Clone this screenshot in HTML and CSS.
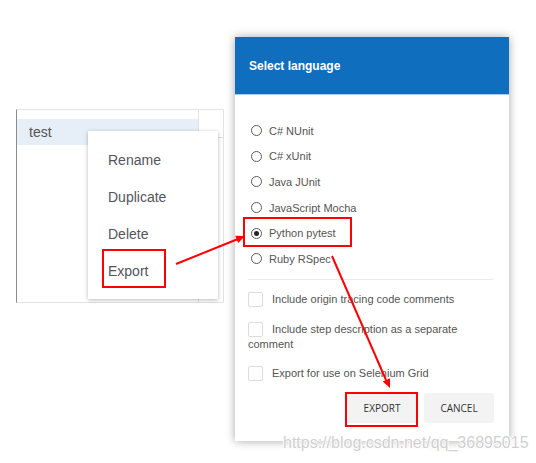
FILE: index.html
```html
<!DOCTYPE html>
<html>
<head>
<meta charset="utf-8">
<link rel="stylesheet" href="styles.css">
</head>
<body>
<div class="canvas">
  <div class="tree">
    <div class="tree-main">
      <div class="tree-row">test</div>
    </div>
    <div class="tree-side">
      <div class="side-head"></div>
    </div>
  </div>

  <ul class="menu">
    <li>Rename</li>
    <li>Duplicate</li>
    <li>Delete</li>
    <li>Export</li>
  </ul>

  <div class="dialog">
    <div class="dialog-head">Select language</div>
    <div class="dialog-body">
      <ul class="radios">
        <li><span class="radio"></span>C# NUnit</li>
        <li><span class="radio"></span>C# xUnit</li>
        <li><span class="radio"></span>Java JUnit</li>
        <li><span class="radio"></span>JavaScript Mocha</li>
        <li><span class="radio checked"></span>Python pytest</li>
        <li><span class="radio"></span>Ruby RSpec</li>
      </ul>
      <div class="divider"></div>
      <label class="check"><span class="box"></span>Include origin tracing code comments</label>
      <label class="check"><span class="box"></span>Include step description as a separate comment</label>
      <label class="check"><span class="box"></span>Export for use on Selenium Grid</label>
      <div class="actions">
        <button class="btn">EXPORT</button>
        <button class="btn">CANCEL</button>
      </div>
    </div>
  </div>

  <div class="watermark">https://blog.csdn.net/qq_36895015</div>

  <svg class="notes" width="536" height="463" viewBox="0 0 536 463">
    <g fill="none" stroke="#ff0000" stroke-width="2">
      <rect x="103" y="250" width="62" height="37"/>
      <rect x="244" y="218" width="107" height="28"/>
      <rect x="346" y="393" width="71" height="33"/>
      <line x1="176" y1="264" x2="238" y2="239"/>
      <line x1="332" y1="256" x2="386" y2="380"/>
    </g>
    <g fill="#ff0000">
      <polygon points="245,236 238.2,243.1 235.2,235.7"/>
      <polygon points="390,388 390.1,378.2 382.7,381.4"/>
    </g>
  </svg>
</div>
</body>
</html>
```

FILE: styles.css
```css
* { box-sizing: border-box; }
html, body { margin: 0; padding: 0; background: #fff; }
body { font-family: "Liberation Sans", Arial, sans-serif; color: #555; }

.canvas {
  position: relative;
  width: 536px;
  height: 463px;
  overflow: hidden;
}

/* left tree panel (window on the canvas) */
.tree {
  position: absolute;
  left: 16px;
  top: 109px;
  width: 208px;
  height: 194px;
  display: grid;
  grid-template-columns: 182px 1fr;
  border: 1px solid #e2e2e2;
  border-left: 1px solid #8c8c8c;
  background: #fff;
}
.tree-main {
  border-right: 1px solid #e2e2e2;
  padding-top: 9px;
}
.tree-row {
  height: 26px;
  line-height: 26px;
  padding-left: 12px;
  background: #e6eef7;
  font-size: 14px;
  color: #555;
}
.side-head {
  height: 28px;
  border-bottom: 1px solid #e2e2e2;
}

/* context menu */
.menu {
  position: absolute;
  left: 88px;
  top: 131px;
  width: 130px;
  height: 168px;
  margin: 0;
  padding: 11px 0 0 20px;
  list-style: none;
  background: #fff;
  box-shadow: 0 1px 4px rgba(0, 0, 0, 0.28);
}
.menu li {
  height: 37px;
  line-height: 37px;
  font-size: 14px;
  color: #545460;
}

/* dialog */
.dialog {
  position: absolute;
  left: 235px;
  top: 37px;
  width: 274px;
  height: 404px;
  background: #fff;
  display: flex;
  flex-direction: column;
  box-shadow: 0 0 9px rgba(0, 0, 0, 0.35);
}
.dialog-head {
  height: 58px;
  flex: none;
  display: flex;
  align-items: center;
  padding-left: 14px;
  background: #106ebe;
  border-bottom: 1px solid #a9cbe9;
  color: #fff;
  font-weight: bold;
  font-size: 12px;
}
.dialog-body {
  flex: 1;
  display: flex;
  flex-direction: column;
  padding: 23px 15px 18px 13px;
}
.radios {
  margin: 0;
  padding: 0;
  list-style: none;
}
.radios li {
  height: 25.6px;
  display: flex;
  align-items: center;
  font-size: 11px;
  color: #555;
}
.radio {
  width: 11px;
  height: 11px;
  margin: 0 7px 0 3px;
  border: 1px solid #5a5a5a;
  border-radius: 50%;
  display: flex;
  align-items: center;
  justify-content: center;
  background: #fff;
}
.radio.checked::after {
  content: "";
  width: 5px;
  height: 5px;
  border-radius: 50%;
  background: #222;
}
.divider {
  margin: 7px 1px 0 0;
  border-top: 1px solid #ebebeb;
}
.check {
  display: block;
  font-size: 11px;
  line-height: 14px;
  color: #555;
}
.divider + .check { margin-top: 12px; }
.check + .check { margin-top: 15px; }
.box {
  display: inline-block;
  width: 15px;
  height: 15px;
  margin-right: 9px;
  vertical-align: -4px;
  border: 1px solid #dcdcdc;
  border-radius: 2px;
  background: #fff;
}
.actions {
  margin-top: auto;
  display: flex;
  justify-content: flex-end;
  gap: 7px;
}
.btn {
  width: 70px;
  height: 30px;
  border: none;
  border-radius: 2px;
  background: #f3f3f3;
  font-family: "Open Sans", sans-serif;
  font-size: 10px;
  color: #333;
  padding: 0;
}

/* csdn watermark */
.watermark {
  position: absolute;
  left: 283px;
  top: 434px;
  font-size: 16px;
  line-height: 18px;
  color: rgba(195, 195, 195, 0.8);
  text-shadow: 1px 0 1px #fff, -1px 0 1px #fff, 0 1px 1px #fff, 0 -1px 1px #fff;
  white-space: nowrap;
}

/* red annotation layer */
.notes {
  position: absolute;
  left: 0;
  top: 0;
  pointer-events: none;
}
```
